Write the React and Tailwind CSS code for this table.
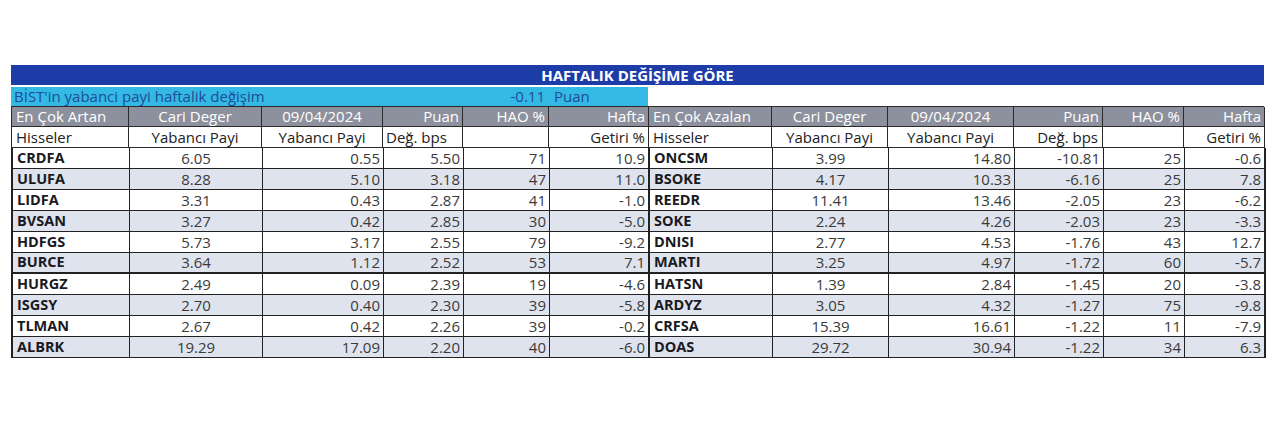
import React from "react";

const left = [
  ["CRDFA", "6.05", "0.55", "5.50", "71", "10.9"],
  ["ULUFA", "8.28", "5.10", "3.18", "47", "11.0"],
  ["LIDFA", "3.31", "0.43", "2.87", "41", "-1.0"],
  ["BVSAN", "3.27", "0.42", "2.85", "30", "-5.0"],
  ["HDFGS", "5.73", "3.17", "2.55", "79", "-9.2"],
  ["BURCE", "3.64", "1.12", "2.52", "53", "7.1"],
  ["HURGZ", "2.49", "0.09", "2.39", "19", "-4.6"],
  ["ISGSY", "2.70", "0.40", "2.30", "39", "-5.8"],
  ["TLMAN", "2.67", "0.42", "2.26", "39", "-0.2"],
  ["ALBRK", "19.29", "17.09", "2.20", "40", "-6.0"],
];
const right = [
  ["ONCSM", "3.99", "14.80", "-10.81", "25", "-0.6"],
  ["BSOKE", "4.17", "10.33", "-6.16", "25", "7.8"],
  ["REEDR", "11.41", "13.46", "-2.05", "23", "-6.2"],
  ["SOKE", "2.24", "4.26", "-2.03", "23", "-3.3"],
  ["DNISI", "2.77", "4.53", "-1.76", "43", "12.7"],
  ["MARTI", "3.25", "4.97", "-1.72", "60", "-5.7"],
  ["HATSN", "1.39", "2.84", "-1.45", "20", "-3.8"],
  ["ARDYZ", "3.05", "4.32", "-1.27", "75", "-9.8"],
  ["CRFSA", "15.39", "16.61", "-1.22", "11", "-7.9"],
  ["DOAS", "29.72", "30.94", "-1.22", "34", "6.3"],
];

const grid =
  "grid grid-cols-[117px_133px_121px_80px_86px_100px_123px_116px_126px_89px_81px_81px]";

export default function App() {
  return (
    <div
      className="w-[1280px] h-[439px] bg-white pt-[65px] pl-[11px] text-[15px] leading-none"
      style={{ fontFamily: '"Open Sans", "Liberation Sans", sans-serif' }}
    >
      <div className="w-[1253px]">
        {/* title */}
        <div className="h-[20px] bg-[#1d3ca8] flex items-center justify-center text-white font-bold text-[15px]">
          HAFTALIK DEĞİŞİME GÖRE
        </div>
        {/* cyan row */}
        <div className={`${grid} mt-[2px] h-[19px] text-[#1f4d96] text-[15px]`}>
          <div className="col-span-4 bg-[#33b9e4] flex items-center pl-[3px] whitespace-nowrap">
            BİST'in yabanci payi haftalik değişim
          </div>
          <div className="bg-[#33b9e4] flex items-center justify-end pr-[3px]">-0.11</div>
          <div className="bg-[#33b9e4] flex items-center pl-[6px]">Puan</div>
        </div>
        {/* header grey */}
        <div className={`${grid} h-[21px] bg-[#8d919d] text-white border-t border-l border-[#2a2a2a]`}>
          {["En Çok Artan", "Cari Deger", "09/04/2024", "Puan", "HAO %", "Hafta", "En Çok Azalan", "Cari Deger", "09/04/2024", "Puan", "HAO %", "Hafta"].map((t, i) => (
            <div
              key={i}
              className={`flex items-center border-r border-b border-[#2a2a2a] whitespace-nowrap ${
                i % 6 === 0 ? "justify-start pl-[4px]" : i % 6 <= 2 ? "justify-center" : "justify-end pr-[3px]"
              }`}
            >
              {t}
            </div>
          ))}
        </div>
        {/* sub header */}
        <div className={`${grid} h-[21px] bg-white text-[#222] border-l border-[#2a2a2a]`}>
          {["Hisseler", "Yabancı Payi", "Yabancı Payi", "Değ. bps", "", "Getiri %", "Hisseler", "Yabancı Payi", "Yabancı Payi", "Değ. bps", "", "Getiri %"].map((t, i) => (
            <div
              key={i}
              className={`flex items-center border-r border-b border-[#2a2a2a] whitespace-nowrap ${
                i % 6 === 0
                  ? "justify-start pl-[4px]"
                  : i % 6 <= 2
                  ? "justify-center"
                  : i % 6 === 3
                  ? i < 6
                    ? "justify-start pl-[3px]"
                    : "justify-end pr-[4px]"
                  : "justify-end pr-[3px]"
              }`}
            >
              {t}
            </div>
          ))}
        </div>
        {/* data */}
        {left.map((row, r) => {
          const rr = right[r];
          const bg = r % 2 === 1 ? "bg-[#dfe3ee]" : "bg-white";
          const thick = r === 5 ? "border-b-2" : "border-b";
          return (
            <div key={r} className={`${grid} h-[21px] ${bg} border-l-2 border-[#222]`}>
              {[...row, ...rr].map((t, i) => {
                const j = i % 6;
                return (
                  <div
                    key={i}
                    className={`flex items-center border-[#222] ${thick} ${
                      i === 5 || i === 11 ? "border-r-2" : "border-r"
                    } whitespace-nowrap ${
                      j === 0
                        ? "justify-start pl-[4px] font-bold text-[#1a1a22] text-[14.5px]"
                        : j === 1
                        ? "justify-center text-[#3a3a3a]"
                        : "justify-end pr-[3px] text-[#3a3a3a]"
                    }`}
                  >
                    {t}
                  </div>
                );
              })}
            </div>
          );
        })}
      </div>
    </div>
  );
}
